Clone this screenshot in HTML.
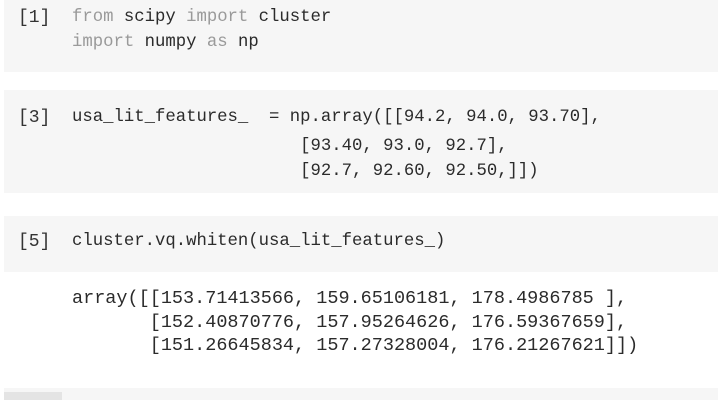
<!DOCTYPE html>
<html><head><style>
body{margin:0;width:718px;height:400px;background:#fff;overflow:hidden;position:relative;font-family:"Liberation Mono",monospace;font-size:17.3px;color:#2b2b2b}
.cell{position:absolute;left:4px;right:0;background:#f6f6f6}
.t{position:absolute;white-space:pre;line-height:24.5px}
.k{color:#9a9a9a}
.n{position:absolute;left:18px;white-space:pre;color:#333;font-size:18px}
</style></head><body>
<div class="cell" style="top:0;height:72px"></div>
<div class="n" style="top:8px">[1]</div>
<div class="t" style="left:72px;top:6px"><span class="k">from</span> scipy <span class="k">import</span> cluster
<span class="k">import</span> numpy <span class="k">as</span> np</div>

<div class="cell" style="top:90px;height:103px"></div>
<div class="n" style="top:108px">[3]</div>
<div class="t" style="left:72px;top:106px">usa_lit_features_  = np.array([[94.2, 94.0, 93.70],</div>
<div class="t" style="left:72px;top:135px">                      [93.40, 93.0, 92.7],
                      [92.7, 92.60, 92.50,]])</div>

<div class="cell" style="top:216px;height:56px"></div>
<div class="n" style="top:232px">[5]</div>
<div class="t" style="left:72px;top:230px">cluster.vq.whiten(usa_lit_features_)</div>

<div class="t" style="left:72px;top:287px;line-height:23.5px;font-size:18.5px">array([[153.71413566, 159.65106181, 178.4986785 ],
       [152.40870776, 157.95264626, 176.59367659],
       [151.26645834, 157.27328004, 176.21267621]])</div>

<div style="position:absolute;left:4px;right:0;top:388px;height:12px;background:#f6f6f6"></div>
<div style="position:absolute;left:4px;width:58px;top:392px;height:8px;background:#e4e4e4"></div>
</body></html>
